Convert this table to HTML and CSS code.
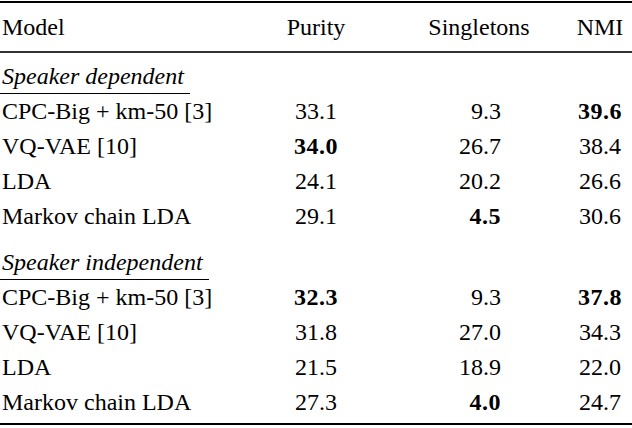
FILE: index.html
```html
<!DOCTYPE html>
<html lang="en">
<head>
<meta charset="utf-8">
<title>Clustering results</title>
<link rel="stylesheet" href="styles.css">
</head>
<body>
<div class="table">
  <div class="row head">
    <div class="c-model">Model</div>
    <div class="c-num">Purity</div>
    <div class="c-num">Singletons</div>
    <div class="c-num">NMI</div>
  </div>
  <div class="group">
    <div class="section"><span class="label">Speaker dependent</span></div>
    <div class="row">
      <div class="c-model">CPC-Big + km-50 [3]</div>
      <div class="c-num"><span class="v">33.1</span></div>
      <div class="c-num"><span class="v r">9.3</span></div>
      <div class="c-num"><span class="v b">39.6</span></div>
    </div>
    <div class="row">
      <div class="c-model">VQ-VAE [10]</div>
      <div class="c-num"><span class="v b">34.0</span></div>
      <div class="c-num"><span class="v r">26.7</span></div>
      <div class="c-num"><span class="v">38.4</span></div>
    </div>
    <div class="row">
      <div class="c-model">LDA</div>
      <div class="c-num"><span class="v">24.1</span></div>
      <div class="c-num"><span class="v r">20.2</span></div>
      <div class="c-num"><span class="v">26.6</span></div>
    </div>
    <div class="row">
      <div class="c-model">Markov chain LDA</div>
      <div class="c-num"><span class="v">29.1</span></div>
      <div class="c-num"><span class="v r b">4.5</span></div>
      <div class="c-num"><span class="v">30.6</span></div>
    </div>
  </div>
  <div class="group second">
    <div class="section"><span class="label">Speaker independent</span></div>
    <div class="row">
      <div class="c-model">CPC-Big + km-50 [3]</div>
      <div class="c-num"><span class="v b">32.3</span></div>
      <div class="c-num"><span class="v r">9.3</span></div>
      <div class="c-num"><span class="v b">37.8</span></div>
    </div>
    <div class="row">
      <div class="c-model">VQ-VAE [10]</div>
      <div class="c-num"><span class="v">31.8</span></div>
      <div class="c-num"><span class="v r">27.0</span></div>
      <div class="c-num"><span class="v">34.3</span></div>
    </div>
    <div class="row">
      <div class="c-model">LDA</div>
      <div class="c-num"><span class="v">21.5</span></div>
      <div class="c-num"><span class="v r">18.9</span></div>
      <div class="c-num"><span class="v">22.0</span></div>
    </div>
    <div class="row">
      <div class="c-model">Markov chain LDA</div>
      <div class="c-num"><span class="v">27.3</span></div>
      <div class="c-num"><span class="v r b">4.0</span></div>
      <div class="c-num"><span class="v">24.7</span></div>
    </div>
  </div>
</div>
</body>
</html>
```
FILE: styles.css
```css
html, body {
  margin: 0;
  padding: 0;
  background: #fff;
}

body {
  font-family: "Liberation Serif", Tinos, "Times New Roman", Times, "DejaVu Serif", serif;
  font-size: 24px;
  color: #000;
}

.table {
  width: 632px;
  margin-top: 1px;
  border-top: 2px solid #000;
  border-bottom: 2px solid #000;
  padding-bottom: 3px;
}

.row {
  display: grid;
  grid-template-columns: 242px 148px 178px 64px;
  line-height: 35px;
  height: 35px;
}

.head {
  padding: 7px 0 6px;
  border-bottom: 2px solid #333;
}

.c-model {
  padding-left: 2px;
  white-space: nowrap;
}

.c-num {
  text-align: center;
  white-space: nowrap;
}

.v {
  display: inline-block;
  width: 44px;
  text-align: center;
}

.v.r {
  text-align: right;
}

.b {
  font-weight: bold;
  letter-spacing: 0.5px;
}

.group {
  margin-top: 6px;
}

.group.second {
  margin-top: 11px;
}

.section {
  height: 35px;
}

.label {
  display: inline-block;
  font-style: italic;
  line-height: 34px;
  padding: 0 6px 0 2px;
  border-bottom: 1px solid #000;
}
```
